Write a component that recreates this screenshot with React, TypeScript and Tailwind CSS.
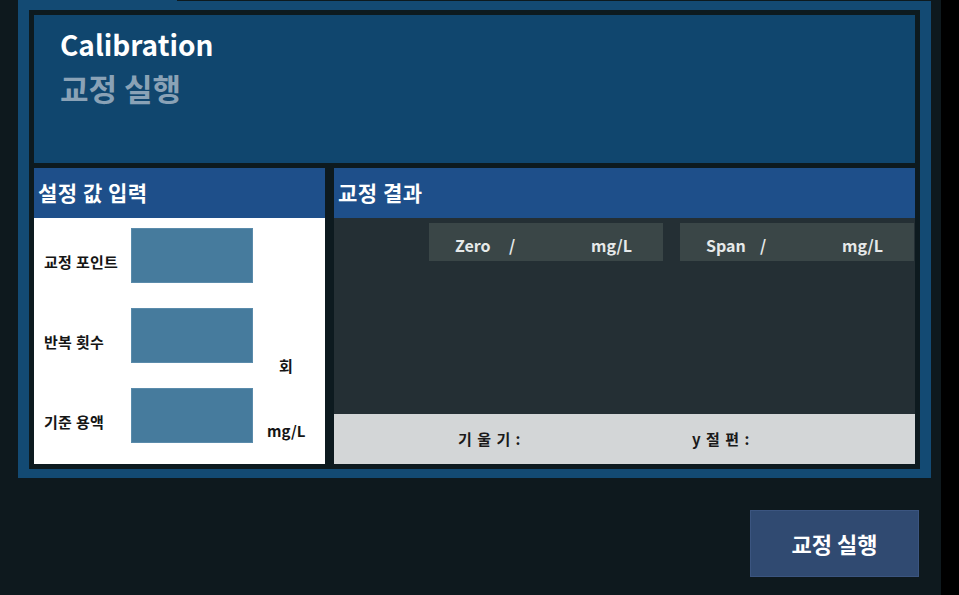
const font = { fontFamily: '"Noto Sans CJK KR", "Noto Sans", sans-serif' };

const InputRow = ({ label, unit, unitClass }: { label: string; unit?: string; unitClass?: string }) => (
  <div className="flex h-[80px] items-start">
    <div className="mt-[25px] w-[97px] shrink-0 pl-[10px] text-[15px] font-bold leading-[17px] tracking-[0.3px] text-[#151515]">{label}</div>
    <div className="h-[55px] w-[122px] shrink-0 border border-[#5a8bab] bg-[#467b9d]" />
    {unit && <div className={`text-[15px] font-bold leading-[17px] text-[#151515] ${unitClass}`}>{unit}</div>}
  </div>
);

const ValueBox = ({ name }: { name: string }) => (
  <div className="flex h-[38px] w-[234px] shrink-0 items-center bg-[#3a4647] pl-[26px] pt-[6px] text-[16px] font-semibold text-[#e6e9e9]">
    <span className="w-[54px]">{name}</span>
    <span className="w-[82px]">/</span>
    <span>mg/L</span>
  </div>
);

export default function App() {
  return (
    <div className="flex h-[595px] w-[959px] bg-black" style={font}>
      <div className="h-full w-[941px] shrink-0 bg-[#0e191e]">
        {/* outer panel */}
        <div className="ml-[18px] h-[478px] w-[913px] bg-[#134a73] px-[11px]">
          <div className="-mr-[11px] ml-[148px] h-px bg-[#0d1a1f]" />
          <div className="mt-[9px] flex h-[459px] flex-col gap-[5px] bg-[#0d1a1f] p-[5px]">
            {/* title */}
            <div className="h-[148px] shrink-0 bg-[#10466e] pl-[26px]">
              <div className="mt-[11px] text-[28px] font-semibold leading-[36px] text-white">Calibration</div>
              <div className="mt-[8px] text-[31px] font-semibold leading-[36px] text-[#8aa2b6]">교정 실행</div>
            </div>

            <div className="flex h-[296px] shrink-0 gap-[9px]">
              {/* settings */}
              <div className="flex w-[291px] shrink-0 flex-col">
                <div className="flex h-[50px] shrink-0 items-center bg-[#1e4f8a] pl-[4px] text-[21px] font-bold tracking-[0.5px] text-white">설정 값 입력</div>
                <div className="flex-1 overflow-hidden bg-white pt-[10px]">
                  <InputRow label="교정 포인트" />
                  <InputRow label="반복 횟수" unit="회" unitClass="ml-[26px] mt-[49px]" />
                  <InputRow label="기준 용액" unit="mg/L" unitClass="ml-[14px] mt-[34px]" />
                </div>
              </div>

              {/* results */}
              <div className="flex min-w-0 flex-1 flex-col">
                <div className="flex h-[50px] shrink-0 items-center bg-[#1e4f8a] pl-[4px] text-[21px] font-bold tracking-[0.5px] text-white">교정 결과</div>
                <div className="flex h-[196px] shrink-0 gap-[17px] overflow-hidden bg-[#242f34] pl-[95px] pt-[5px]">
                  <ValueBox name="Zero" />
                  <ValueBox name="Span" />
                </div>
                <div className="flex flex-1 items-center bg-[#d3d6d7] pl-[124px] text-[15px] font-bold tracking-[1px] text-[#1a1a1a]">
                  <span className="w-[234px]">기 울 기 :</span>
                  <span>y 절 편 :</span>
                </div>
              </div>
            </div>
          </div>
        </div>

        <div className="ml-[750px] mt-[32px] flex h-[67px] w-[169px] items-center justify-center border border-[#3b5580] bg-[#304a71] text-[22px] font-bold text-white">
          교정 실행
        </div>
      </div>
    </div>
  );
}
